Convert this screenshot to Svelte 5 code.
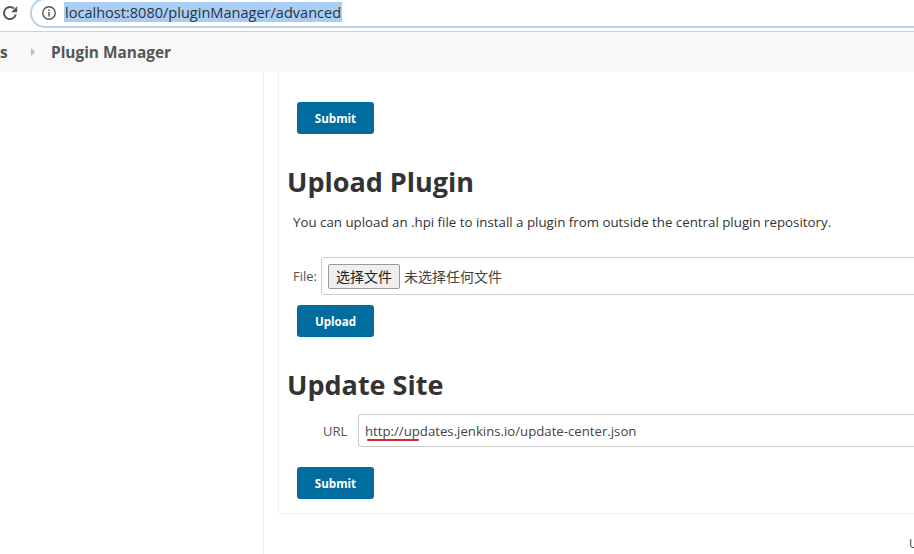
<script lang="ts">
    const crumbs = "Plugin Manager";
</script>

<div class="screen">
    <header class="toolbar">
        <svg class="reload" viewBox="0 0 16 16" width="16" height="16" fill="none">
            <path d="M13.8 9.5A6 6 0 1 1 12 3.6" stroke="#555" stroke-width="2" />
            <path d="M9.2 7.2h6V1.2z" fill="#555" />
        </svg>
        <div class="omnibox">
            <svg class="info" viewBox="0 0 16 16" width="16" height="16" fill="none">
                <circle cx="8" cy="8" r="6.2" stroke="#555" stroke-width="1.4" />
                <path d="M8 7v4.4M8 4.4v1.5" stroke="#555" stroke-width="1.5" />
            </svg>
            <span class="url">localhost:8080/pluginManager/advanced</span>
        </div>
    </header>

    <nav class="breadcrumb">
        <span class="prev">s</span>
        <span class="arrow"></span>
        <span class="current">{crumbs}</span>
    </nav>

    <div class="page">
        <aside class="side"></aside>
        <div class="main">
            <section class="card">
                <button class="btn first" type="button">Submit</button>

                <h1 class="upload-title">Upload Plugin</h1>
                <p class="hint">You can upload an .hpi file to install a plugin from outside the central plugin repository.</p>

                <div class="file-row">
                    <span class="label">File:</span>
                    <div class="file-box">
                        <span class="file-btn">选择文件</span>
                        <span class="file-name">未选择任何文件</span>
                    </div>
                </div>
                <button class="btn upload" type="button">Upload</button>

                <h1 class="site-title">Update Site</h1>
                <div class="url-row">
                    <span class="label">URL</span>
                    <div class="url-box">
                        <span class="site-url">http://updates.jenkins.io/update-center.json</span>
                        <span class="squiggle"></span>
                    </div>
                </div>
                <button class="btn last" type="button">Submit</button>
            </section>
            <footer class="foot">U</footer>
        </div>
    </div>
</div>

<style>
    :global(body) {
        margin: 0;
        background: #fff;
    }

    .screen {
        width: 914px;
        height: 554px;
        overflow: hidden;
        font-family: "Open Sans", "Noto Sans CJK SC", sans-serif;
        color: #333;
    }

    .toolbar {
        display: flex;
        align-items: flex-start;
        height: 32px;
        box-sizing: border-box;
        border-bottom: 1px solid #d0d0d0;
    }

    .reload {
        margin: 5px 0 0 2px;
        flex: none;
    }

    .omnibox {
        display: flex;
        align-items: center;
        flex: 1;
        height: 30px;
        margin: -2px 0 0 12px;
        padding-left: 9px;
        box-sizing: border-box;
        border: 2px solid #b7d0e6;
        border-right: none;
        border-radius: 15px 0 0 15px;
    }

    .info {
        flex: none;
    }

    .url {
        margin: -2px 0 0 7px;
        padding: 0 1px;
        font-size: 14.55px;
        line-height: 20px;
        background: #a9cdf5;
        color: #2a3540;
    }

    .breadcrumb {
        display: flex;
        align-items: center;
        height: 40px;
        background: #f8f8f8;
        color: #555;
        font-size: 15.4px;
        font-weight: 700;
    }

    .prev {
        width: 31px;
    }

    .arrow {
        width: 0;
        height: 0;
        margin-right: 16px;
        border-left: 4px solid #bbb;
        border-top: 4px solid transparent;
        border-bottom: 4px solid transparent;
    }

    .page {
        display: flex;
        height: 482px;
    }

    .side {
        width: 264px;
        flex: none;
        box-sizing: border-box;
        border-right: 1px solid #eee;
    }

    .main {
        flex: 1;
        padding-left: 14px;
    }

    .card {
        display: flex;
        flex-direction: column;
        align-items: flex-start;
        height: 442px;
        box-sizing: border-box;
        border: 1px solid #eee;
        border-top: none;
        border-right: none;
        border-radius: 0 0 0 4px;
    }

    .btn {
        width: 77px;
        height: 32px;
        margin-left: 18px;
        padding: 0;
        border: none;
        border-radius: 3px;
        background: #006d9e;
        color: #fff;
        font-family: "Open Sans", sans-serif;
        font-size: 11.6px;
        font-weight: 700;
    }

    .first {
        margin-top: 30px;
    }

    h1 {
        margin: 0 0 0 8px;
        font-size: 27px;
        line-height: 38px;
        font-weight: 700;
        color: #333;
    }

    .upload-title {
        margin-top: 29px;
    }

    .hint {
        margin: 11px 0 0 14px;
        font-size: 13.3px;
        line-height: 20px;
        color: #333;
    }

    .file-row {
        display: flex;
        align-items: center;
        width: 100%;
        margin-top: 25px;
    }

    .label {
        font-size: 13px;
        color: #555;
    }

    .file-row .label {
        margin-left: 14px;
        width: 28px;
    }

    .file-box {
        display: flex;
        align-items: center;
        flex: 1;
        height: 38px;
        box-sizing: border-box;
        padding-left: 6px;
        border: 1px solid #ccc;
        border-right: none;
        border-radius: 4px 0 0 4px;
        font-size: 14px;
    }

    .file-btn {
        display: flex;
        align-items: center;
        justify-content: center;
        width: 72px;
        height: 25px;
        box-sizing: border-box;
        border: 1px solid #999;
        border-radius: 2px;
        background: #efefef;
        color: #222;
        font-family: "Noto Sans CJK SC", sans-serif;
    }

    .file-name {
        margin-left: 4px;
        font-family: "Noto Sans CJK SC", sans-serif;
        color: #444;
    }

    .upload {
        margin-top: 10px;
    }

    .site-title {
        margin-top: 29px;
    }

    .url-row {
        display: flex;
        align-items: center;
        width: 100%;
        margin-top: 10px;
    }

    .url-row .label {
        margin-left: 44px;
        width: 35px;
    }

    .url-box {
        position: relative;
        flex: 1;
        height: 33px;
        box-sizing: border-box;
        padding-left: 6px;
        border: 1px solid #ccc;
        border-right: none;
        border-radius: 4px 0 0 4px;
        line-height: 31px;
    }

    .site-url {
        font-size: 13.2px;
        color: #444;
    }

    /* red underline that sits on top of the input text */
    .squiggle {
        position: absolute;
        left: 8px;
        top: 24px;
        width: 52px;
        height: 2px;
        border-radius: 1px;
        background: #d8232a;
    }

    .last {
        margin-top: 20px;
    }

    .foot {
        margin: 22px 0 0 631px;
        font-size: 12px;
        line-height: 16px;
        color: #444;
    }
</style>
